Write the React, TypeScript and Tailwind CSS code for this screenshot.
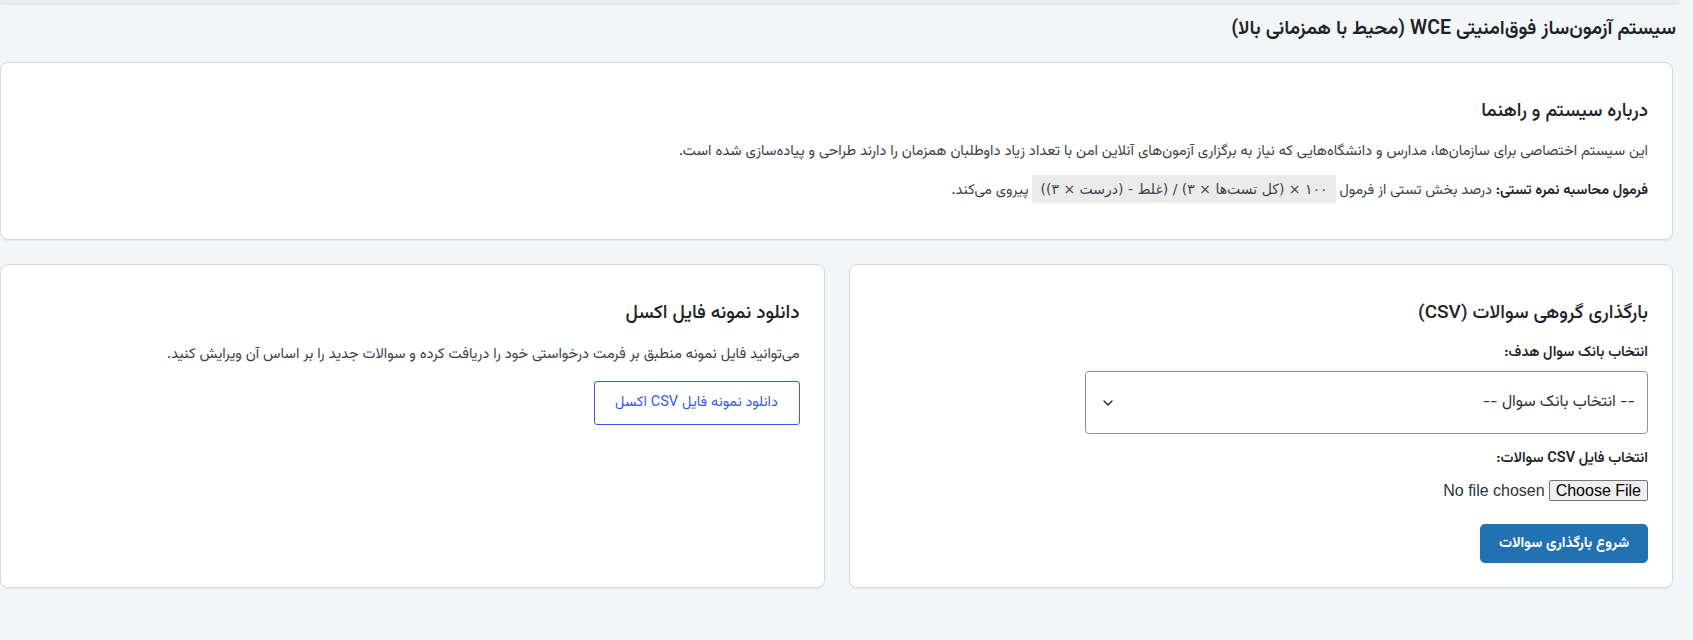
import { ChevronDown } from 'lucide-react'

const fa = "font-['Vazirmatn','DejaVu_Sans','Noto_Sans',sans-serif]"

function AboutCard() {
  return (
    <section className="mt-[19px] rounded-lg border border-[#d6dadf] bg-white px-6 pt-[35px] pb-[34px] shadow-[0_1px_2px_rgba(0,0,0,0.06)]">
      <h2 className="text-[19px] font-medium leading-[28px] text-[#1d2327]">درباره سیستم و راهنما</h2>
      <p className="mt-[14px] text-[14.7px] leading-[24px] text-[#3c434a]">
        این سیستم اختصاصی برای سازمان‌ها، مدارس و دانشگاه‌هایی که نیاز به برگزاری آزمون‌های آنلاین امن با تعداد زیاد داوطلبان همزمان را دارند طراحی و پیاده‌سازی شده است.
      </p>
      <p className="mt-[11px] text-[14.5px] leading-[28px] text-[#3c434a]">
        <strong className="font-semibold text-[#1d2327]">فرمول محاسبه نمره تستی:</strong> درصد بخش تستی از فرمول{' '}
        <code className="inline-block bg-black/[0.08] px-[8px] leading-[28px] font-['DejaVu_Sans',sans-serif] text-[14px]">
          ۱۰۰ × (کل تست‌ها × ۳) / (غلط - (درست × ۳))
        </code>{' '}
        پیروی می‌کند.
      </p>
    </section>
  )
}

function UploadCard() {
  return (
    <section className="rounded-lg border border-[#d6dadf] bg-white px-6 pt-[35px] pb-6 shadow-[0_1px_2px_rgba(0,0,0,0.06)]">
      <h2 className="text-[19px] font-medium leading-[28px] text-[#1d2327]">بارگذاری گروهی سوالات (CSV)</h2>
      <label className="mt-[15px] block text-[14.5px] font-semibold leading-[20px] text-[#1d2327]">انتخاب بانک سوال هدف:</label>
      <div className="mt-2 flex h-[63px] w-[563px] items-center justify-between rounded-[4px] border border-[#8c8f94] pr-3 pl-[14px]">
        <span className="text-[16px] text-[#2c3338]">-- انتخاب بانک سوال --</span>
        <ChevronDown className="h-4 w-4 text-[#1d2327]" strokeWidth={2} />
      </div>
      <label className="mt-[15px] block text-[14.5px] font-semibold leading-[20px] text-[#1d2327]">انتخاب فایل CSV سوالات:</label>
      <div className="mt-[11px] flex">
        <input
          type="file"
          className="font-['Liberation_Sans',Arial,sans-serif] text-[16px] leading-[19px] text-[#2c3338] file:ml-1 file:rounded-[2px] file:border file:border-[#767676] file:bg-[#efefef] file:px-[6px] file:py-0 file:text-black"
        />
      </div>
      <button className="mt-[23px] h-[39px] w-[168px] rounded-[5px] bg-[#2271b1] text-[14.5px] font-bold text-white">
        شروع بارگذاری سوالات
      </button>
    </section>
  )
}

function DownloadCard() {
  return (
    <section className="rounded-lg border border-[#d6dadf] bg-white px-6 pt-[35px] pb-6 shadow-[0_1px_2px_rgba(0,0,0,0.06)]">
      <h2 className="text-[19px] font-medium leading-[28px] text-[#1d2327]">دانلود نمونه فایل اکسل</h2>
      <p className="mt-[15px] text-[14.7px] leading-[24px] text-[#3c434a]">
        می‌توانید فایل نمونه منطبق بر فرمت درخواستی خود را دریافت کرده و سوالات جدید را بر اساس آن ویرایش کنید.
      </p>
      <button className="mt-[14px] h-[44px] w-[206px] rounded-[3px] border border-[#3858e9] bg-white text-[14.5px] text-[#3858e9]">
        دانلود نمونه فایل CSV اکسل
      </button>
    </section>
  )
}

export default function App() {
  return (
    <div dir="rtl" className={`min-h-screen bg-[#f3f6f9] ${fa}`}>
      <div className="mr-[13px] h-[3px] rounded-br-md bg-[#e8ecf0] shadow-[0_1px_3px_rgba(0,0,0,0.12)]" />
      <div className="mr-5">
        <h1 className="-mr-[3px] mt-[12px] text-[19.5px] font-semibold leading-[28px] text-[#1d2327]">
          سیستم آزمون‌ساز فوق‌امنیتی WCE (محیط با همزمانی بالا)
        </h1>
        <AboutCard />
        <div className="mt-6 grid grid-cols-2 gap-6">
          <UploadCard />
          <DownloadCard />
        </div>
      </div>
    </div>
  )
}
